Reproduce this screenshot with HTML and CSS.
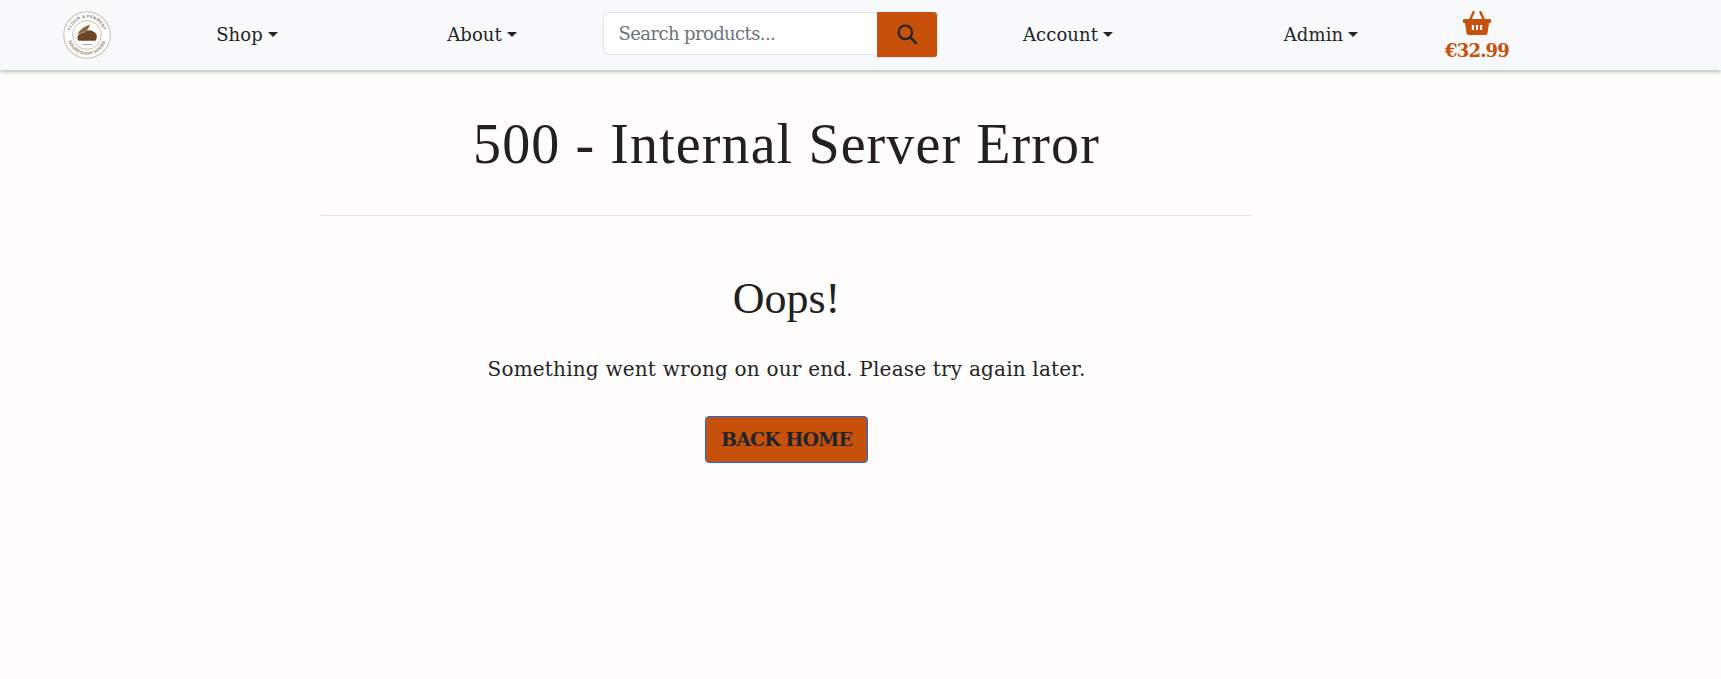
FILE: index.html
```html
<!DOCTYPE html>
<html>
  <head>
    <title>500 - Internal Server Error</title>
    <link rel="stylesheet" href="styles.css">
  </head>
  <body>
    <nav class="navbar">
      <a class="logo" href="#">
        <svg viewBox="0 0 50 50" width="50" height="48">
          <defs>
            <path id="arcTop" d="M7 25a18 18 0 0 1 36 0"></path>
            <path id="arcBottom" d="M4.5 25a20.5 20.5 0 0 0 41 0"></path>
          </defs>
          <circle cx="25" cy="25" r="24.2" fill="#fff" stroke="#cdbcab" stroke-width="1.1"></circle>
          <circle cx="25" cy="25" r="15" fill="#fff" stroke="#bfa994" stroke-width="0.8"></circle>
          <text class="logo-text"><textPath href="#arcTop" startOffset="50%" text-anchor="middle">FLOUR &amp; FERMENT</textPath></text>
          <text class="logo-text"><textPath href="#arcBottom" startOffset="50%" text-anchor="middle">SOURDOUGH GOODS</textPath></text>
          <path d="M15 28c0-3 3-5 6-5 3-3 7-4 10-2 3 1 5 4 4 7 0 2-1 3-3 3H18c-2 0-3-1-3-3z" fill="#6d4527"></path>
          <path d="M15 24c3-5 7-8 13-10-1 4-3 7-6 8-3 1-5 2-7 2z" fill="#8a6446"></path>
          <path d="M20 35h10" stroke="#a8917b" stroke-width="0.9"></path>
        </svg>
      </a>
      <a class="nav-link dropdown" href="#">Shop</a>
      <a class="nav-link dropdown" href="#">About</a>
      <form class="search">
        <input class="search-input" type="text" placeholder="Search products...">
        <button class="search-btn" type="button" aria-label="Search">
          <svg viewBox="0 0 20 20" width="20" height="20">
            <circle cx="8.3" cy="8.3" r="6.8" fill="none" stroke="#212529" stroke-width="2.2"></circle>
            <path d="M13.2 13.2l5.6 5.6" stroke="#212529" stroke-width="2.6" stroke-linecap="round"></path>
          </svg>
        </button>
      </form>
      <a class="nav-link dropdown" href="#">Account</a>
      <a class="nav-link dropdown nav-admin" href="#">Admin</a>
      <a class="cart" href="#">
        <svg viewBox="0 0 28 24" width="28" height="24">
          <path d="M6.500 10L10.500 1.200M21.500 10L17.500 1.200" fill="none" stroke="#c7500a" stroke-width="2.4" stroke-linecap="round"></path>
          <path fill="#c7500a" fill-rule="evenodd" d="M1 8h26a1 1 0 0 1 1 1v2a1 1 0 0 1-1 1h-1l-1.500 10.300a2 2 0 0 1-2 1.700H5.500a2 2 0 0 1-2-1.700L2 12H1a1 1 0 0 1-1-1V9a1 1 0 0 1 1-1zM8.800 14v5h2.200v-5zM12.900 14v5h2.200v-5zM17 14v5h2.200v-5z"></path>
        </svg>
        <span class="cart-total">€32.99</span>
      </a>
    </nav>

    <main class="content">
      <h1 class="title">500 - Internal Server Error</h1>
      <hr class="divider">
      <h2 class="subtitle">Oops!</h2>
      <p class="message">Something went wrong on our end. Please try again later.</p>
      <a class="home-btn" href="#">BACK HOME</a>
    </main>
  </body>
</html>
```

FILE: styles.css
```css
html, body {
  height: 100%;
}

body {
  margin: 0;
  background-color: #fffdfb;
  color: #212529;
  font-family: "DejaVu Serif", "Liberation Serif", serif;
  overflow: hidden;
}

a {
  color: inherit;
  text-decoration: none;
}

.navbar {
  display: grid;
  grid-template-columns: 50px 270px 200px 376px 220px 242px 114px;
  align-items: center;
  justify-items: center;
  height: 70px;
  padding-left: 62px;
  background-color: #f8f9fa;
  box-shadow: 0 2px 4px rgba(0, 0, 0, 0.25);
}

.logo {
  display: flex;
}

.logo-text {
  font-family: "Liberation Sans", sans-serif;
  font-size: 4.4px;
  font-weight: bold;
  letter-spacing: 0.3px;
  fill: #8f7965;
}

.nav-link {
  padding-bottom: 2px;
  font-size: 18px;
  letter-spacing: 0.1px;
  white-space: nowrap;
}

.nav-admin {
  margin-left: 44px;
}

.dropdown::after {
  content: "";
  display: inline-block;
  margin-left: 5px;
  vertical-align: 4px;
  border-top: 5px solid #212529;
  border-left: 5px solid transparent;
  border-right: 5px solid transparent;
}

.search {
  display: flex;
  align-items: flex-start;
  width: 335px;
  height: 46px;
}

.search-input {
  box-sizing: border-box;
  width: 274px;
  height: 43px;
  padding: 0 15px;
  background-color: #fff;
  border: 1px solid #dee2e6;
  border-right: none;
  border-radius: 6px 0 0 6px;
  font-family: inherit;
  font-size: 18px;
  letter-spacing: -0.6px;
  outline: none;
}

.search-input::placeholder {
  color: #6c757d;
}

.search-btn {
  display: flex;
  align-items: center;
  justify-content: center;
  box-sizing: border-box;
  width: 61px;
  height: 46px;
  margin: 0;
  padding: 0 0 2px;
  background-color: #c7500a;
  border: 1px solid #dee2e6;
  border-width: 0 1px 1px 0;
  border-radius: 0 4px 4px 0;
}

.cart {
  display: flex;
  flex-direction: column;
  align-items: center;
  padding-top: 2px;
}

.cart-total {
  margin-top: 5px;
  color: #c7500a;
  font-size: 18px;
  font-weight: bold;
  line-height: 22px;
  letter-spacing: -0.8px;
}

.content {
  display: flex;
  flex-direction: column;
  align-items: center;
  box-sizing: border-box;
  width: 931px;
  margin-left: 321px;
  text-align: center;
}

.title {
  margin: 40px 0 0;
  font-family: "Liberation Serif", serif;
  font-size: 56px;
  font-weight: normal;
  line-height: 68px;
  letter-spacing: 1.1px;
  color: #212121;
}

.divider {
  align-self: stretch;
  height: 1px;
  margin: 37px 0 0;
  background-color: #e2e2e2;
  border: none;
}

.subtitle {
  margin: 57px 0 0;
  font-family: "Liberation Serif", serif;
  font-size: 44px;
  font-weight: normal;
  line-height: 52px;
  color: #212121;
}

.message {
  margin: 29px 0 0;
  font-size: 20px;
  line-height: 30px;
  letter-spacing: 0.2px;
}

.home-btn {
  box-sizing: border-box;
  width: 163px;
  height: 47px;
  margin-top: 32px;
  background-color: #c7500a;
  border: 1px solid #0d6efd;
  border-radius: 4px;
  font-size: 19px;
  font-weight: bold;
  line-height: 44px;
  letter-spacing: -0.9px;
}
```
